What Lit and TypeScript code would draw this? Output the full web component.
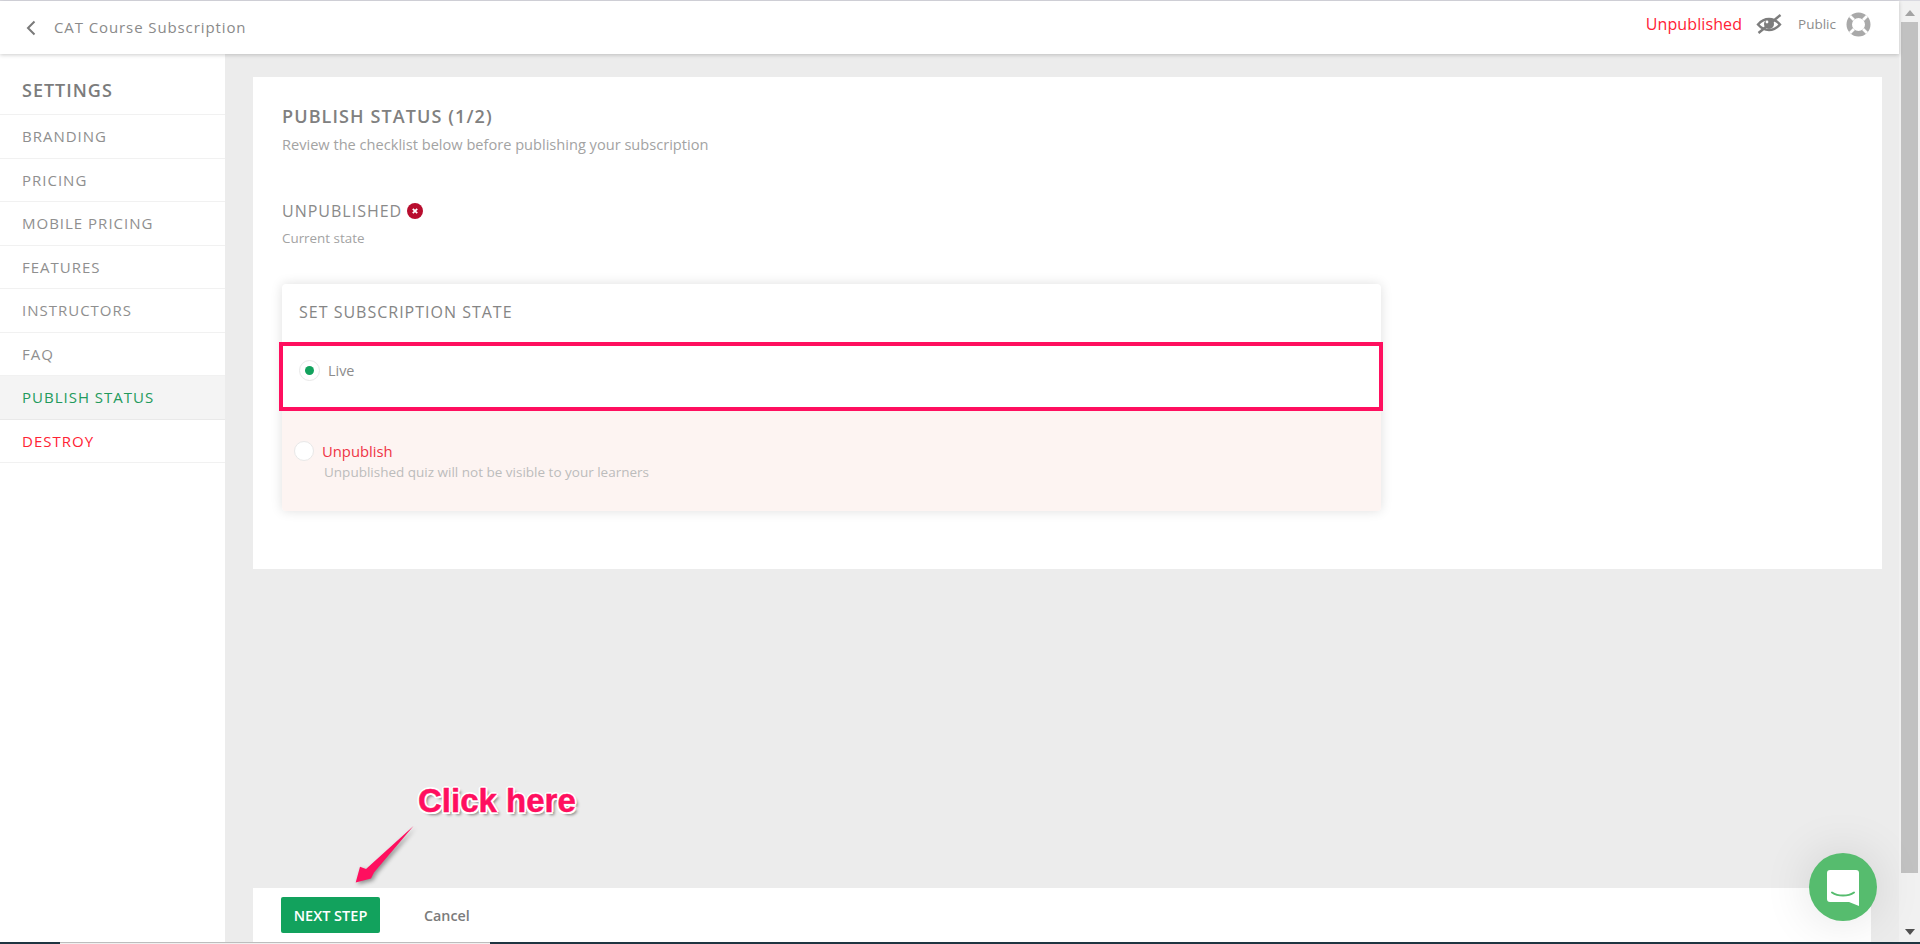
import { LitElement, html, css } from "lit";
import { customElement } from "lit/decorators.js";

const NAV = ["BRANDING", "PRICING", "MOBILE PRICING", "FEATURES", "INSTRUCTORS", "FAQ", "PUBLISH STATUS", "DESTROY"];

@customElement("app-root")
export class AppRoot extends LitElement {
  static styles = css`
    :host { display: block; height: 100vh; overflow: hidden; font-family: "Open Sans", sans-serif; color: #888; background: #ececec; }
    * { box-sizing: border-box; }
    .page { height: 944px; display: flex; flex-direction: column; position: relative; }
    .topline { height: 1px; background: #d9d9e0; flex: none; }
    .window { flex: 1; min-height: 0; display: flex; }
    .app { flex: 1; min-width: 0; display: flex; flex-direction: column; }
    .header { height: 53px; flex: none; background: #fff; display: flex; align-items: center; padding: 0 28px 0 26px; box-shadow: 0 1px 4px rgba(0,0,0,.2); position: relative; z-index: 2; }
    .back { width: 10px; height: 16px; margin-right: 18px; flex: none; }
    .title { font-size: 15px; letter-spacing: .9px; color: #8a8a8a; padding-bottom: 1px; }
    .spacer { flex: 1; }
    .right { display: flex; align-items: center; padding-bottom: 7px; }
    .state { font-size: 16px; letter-spacing: .1px; color: #ff2234; margin-right: 14px; }
    .eye { width: 26px; height: 20px; margin-right: 16px; }
    .public { font-size: 13.500px; color: #8c8c8c; margin-right: 10px; }
    .buoy { width: 25px; height: 25px; }
    .columns { flex: 1; min-height: 0; display: flex; }
    .sidebar { width: 225px; flex: none; background: #fff; }
    .side-title { height: 61px; padding: 24px 0 0 22px; font-size: 18px; line-height: 24px; font-weight: 600; letter-spacing: 1px; color: #7c7c7c; border-bottom: 1px solid #f1f1f1; }
    .nav { height: 43.500px; padding-left: 22px; display: flex; align-items: center; font-size: 15px; letter-spacing: 1px; color: #8f8f8f; border-bottom: 1px solid #f1f1f1; }
    .nav.active { background: #f4f4f4; color: #229a5c; border-bottom-color: #e9e9e9; }
    .nav.danger { color: #ff2234; }
    .main { flex: 1; min-width: 0; display: flex; flex-direction: column; padding: 23px 0 0 28px; }
    .card { height: 492px; margin-right: 17px; background: #fff; padding: 28px 29px 0; }
    h1 { margin: 0; font-size: 18px; line-height: 22px; font-weight: 600; letter-spacing: 1.100px; color: #808080; }
    .sub { margin-top: 7px; font-size: 14.600px; line-height: 20px; color: #a3a3a3; }
    .status { margin-top: 46px; display: flex; align-items: center; font-size: 16px; line-height: 22px; letter-spacing: 1px; color: #8a8a8a; }
    .badge { width: 16px; height: 16px; margin-left: 5px; }
    .current { margin-top: 6px; font-size: 13.400px; line-height: 20px; color: #a3a3a3; }
    .panel { position: relative; margin-top: 36px; width: 1099px; height: 227px; border-radius: 4px; background: #fff; box-shadow: 0 0 12px rgba(0,0,0,.13); display: flex; flex-direction: column; }
    .panel-head { height: 58px; padding: 17px 0 0 17px; font-size: 16px; line-height: 22px; letter-spacing: 1px; color: #858585; flex: none; }
    .live { height: 69px; flex: none; display: flex; align-items: flex-start; padding: 18px 0 0 17px; }
    .radio { width: 21px; height: 21px; border-radius: 50%; border: 1px solid #e8e8e8; background: #fff; display: flex; align-items: center; justify-content: center; flex: none; }
    .dot { width: 9px; height: 9px; border-radius: 50%; background: #12a25d; }
    .live-label { margin-left: 8px; font-size: 14.400px; line-height: 21px; color: #8c8c8c; }
    .unpublish { flex: 1; background: #fdf4f2; border-radius: 0 0 4px 4px; padding: 30px 0 0 12px; display: flex; }
    .unpublish .radio { width: 20px; height: 20px; margin-right: 8px; }
    .un-label { font-size: 14.800px; line-height: 20px; color: #ef3345; }
    .un-sub { margin: 1px 0 0 2px; font-size: 13.500px; line-height: 20px; color: #bcbcbc; }
    .box { position: absolute; left: -3px; top: 58px; width: 1104px; height: 69px; border: 4px solid #ff0f5f; pointer-events: none; }
    .footer { margin: auto 28px 0 0; height: 54px; flex: none; background: #fff; display: flex; align-items: center; padding: 0 0 0 28px; }
    .next { width: 99px; height: 36px; border: 0; border-radius: 2px; background: #12a25d; color: #fff; font: 600 14.500px "Open Sans", sans-serif; padding: 0; }
    .cancel { margin-left: 44px; font-size: 14.300px; font-weight: 600; color: #7b7b7b; }
    .scrollbar { width: 21px; flex: none; background: #f1f1f1; display: flex; flex-direction: column; align-items: center; padding: 3px 2px 2px; }
    .sb-arrow { width: 17px; height: 17px; flex: none; display: flex; align-items: center; justify-content: center; }
    .thumb { width: 17px; height: 851px; background: #c1c1c1; flex: none; margin-top: 1px; }
    .sb-end { margin-top: auto; }
    .taskbar { height: 2px; flex: none; display: flex; background: #1f3541; }
    .task-gap { margin-left: 60px; width: 430px; background: #f0f0f0; border-top: 1px solid #bdbdbd; }
    .callout { position: absolute; left: 418px; top: 781px; font: 700 33px/40px "Liberation Sans", Arial, sans-serif; color: #ff0f5f; white-space: nowrap; -webkit-text-stroke: .5px #ff0f5f;
      text-shadow: -1.500px -1.500px 0 #fff, 1.500px -1.500px 0 #fff, -1.500px 1.500px 0 #fff, 1.500px 1.500px 0 #fff, 0 -2px 0 #fff, 0 2px 0 #fff, -2px 0 0 #fff, 2px 0 0 #fff, 3px 3px 3px rgba(0,0,0,.45); }
    .arrow { position: absolute; left: 350px; top: 822px; width: 70px; height: 66px; overflow: visible; filter: drop-shadow(2px 2px 2px rgba(0,0,0,.4)); }
    .chat { position: absolute; left: 1809px; top: 853px; width: 68px; height: 68px; border-radius: 50%; background: #56bc6e; box-shadow: 0 0 50px rgba(0,0,0,.12); display: flex; align-items: center; justify-content: center; }
    .chat svg { width: 32px; height: 36px; margin-top: 1px; }
  `;

  render() {
    return html`
      <div class="page">
        <div class="topline"></div>
        <div class="window">
          <div class="app">
            <header class="header">
              <svg class="back" viewBox="0 0 10 16"><path d="M8.500 1.500 2 8l6.500 6.500" fill="none" stroke="#7a7a7a" stroke-width="2"/></svg>
              <span class="title">CAT Course Subscription</span>
              <span class="spacer"></span>
              <div class="right">
                <span class="state">Unpublished</span>
                <svg class="eye" viewBox="0 0 26 20">
                  <path d="M2 10.500C5.500 6.500 9 5 13 5s7.500 1.500 11 5.500c-3.500 4-7 5.500-11 5.500S5.500 14.500 2 10.500Z" fill="none" stroke="#7d7d7d" stroke-width="2.400"/>
                  <circle cx="13" cy="10" r="5" fill="#7d7d7d"/>
                  <circle cx="11" cy="8" r="1.400" fill="#fff"/>
                  <path d="M2.500 19 24.500 1" stroke="#7d7d7d" stroke-width="2.400"/>
                </svg>
                <span class="public">Public</span>
                <svg class="buoy" viewBox="0 0 25 25">
                  <circle cx="12.500" cy="12.500" r="9.250" fill="none" stroke="#a9a9a9" stroke-width="5.500"/>
                  <path d="M4 4 8 8M21 4l-4 4M4 21l4-4M21 21l-4-4" stroke="#fff" stroke-width="2.800"/>
                </svg>
              </div>
            </header>
            <div class="columns">
              <aside class="sidebar">
                <div class="side-title">SETTINGS</div>
                ${NAV.map((n) => html`<div class="nav ${n === "PUBLISH STATUS" ? "active" : ""} ${n === "DESTROY" ? "danger" : ""}">${n}</div>`)}
              </aside>
              <main class="main">
                <section class="card">
                  <h1>PUBLISH STATUS (1/2)</h1>
                  <div class="sub">Review the checklist below before publishing your subscription</div>
                  <div class="status">UNPUBLISHED
                    <svg class="badge" viewBox="0 0 16 16"><circle cx="8" cy="8" r="8" fill="#b80d2e"/><path d="M5.800 5.800l4.400 4.400M10.200 5.800l-4.400 4.400" stroke="#fff" stroke-width="1.800"/></svg>
                  </div>
                  <div class="current">Current state</div>
                  <div class="panel">
                    <div class="panel-head">SET SUBSCRIPTION STATE</div>
                    <div class="live">
                      <span class="radio"><span class="dot"></span></span>
                      <span class="live-label">Live</span>
                    </div>
                    <div class="unpublish">
                      <span class="radio"></span>
                      <div>
                        <div class="un-label">Unpublish</div>
                        <div class="un-sub">Unpublished quiz will not be visible to your learners</div>
                      </div>
                    </div>
                    <div class="box"></div>
                  </div>
                </section>
                <footer class="footer">
                  <button class="next">NEXT STEP</button>
                  <span class="cancel">Cancel</span>
                </footer>
              </main>
            </div>
          </div>
          <div class="scrollbar">
            <span class="sb-arrow"><svg width="10" height="6" viewBox="0 0 10 6"><path d="M0 6 5 0l5 6Z" fill="#a3a3a3"/></svg></span>
            <span class="thumb"></span>
            <span class="sb-arrow sb-end"><svg width="10" height="6" viewBox="0 0 10 6"><path d="M0 0h10L5 6Z" fill="#505050"/></svg></span>
          </div>
        </div>
        <div class="taskbar"><span class="task-gap"></span></div>
        <div class="callout">Click here</div>
        <svg class="arrow" viewBox="0 0 70 66"><path d="M63.500 4 24 50.500l-3 6-15.300 4L10 44.700l6 2.300Z" fill="#ff0f5f"/></svg>
        <div class="chat">
          <svg viewBox="0 0 32 36">
            <path d="M3 0h26a3 3 0 0 1 3 3v33l-10-4H3a3 3 0 0 1-3-3V3a3 3 0 0 1 3-3Z" fill="#fff"/>
            <path d="M5 22.500c6 4 16 4 22 0" fill="none" stroke="#56bc6e" stroke-width="2" stroke-linecap="round"/>
          </svg>
        </div>
      </div>
    `;
  }
}
